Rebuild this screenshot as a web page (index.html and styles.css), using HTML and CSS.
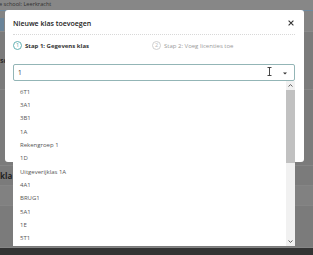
FILE: index.html
```html
<!DOCTYPE html>
<html lang="nl">
<head>
<meta charset="utf-8">
<title>Nieuwe klas toevoegen</title>
<link rel="stylesheet" href="styles.css">
</head>
<body>
<div class="page">
  <div class="topbar">e school: Leerkracht</div>
  <div class="band"><span class="band-mark"></span></div>
  <div class="row r1"><span class="bg-text">sc</span></div>
  <div class="row r2"></div>
  <div class="row r3"><span class="bg-heading">kla</span></div>
  <div class="row r4"></div>
  <div class="row r5"></div>
  <div class="footer"></div>
</div>

<div class="modal">
  <div class="modal-header">
    <h2 class="modal-title">Nieuwe klas toevoegen</h2>
    <svg class="close" width="6" height="6" viewBox="0 0 6 6"><path d="M0.6 0.6 L5.4 5.4 M5.4 0.6 L0.6 5.4" stroke="#333" stroke-width="1.1" fill="none"/></svg>
  </div>
  <div class="steps">
    <div class="step active"><span class="step-num">1</span><span class="step-label">Stap 1: Gegevens klas</span></div>
    <div class="step"><span class="step-num">2</span><span class="step-label">Stap 2: Voeg licenties toe</span></div>
  </div>
  <div class="select">
    <div class="select-box">
      <span class="select-value">1</span>
      <svg class="ibeam" width="5" height="9" viewBox="0 0 5 9"><path d="M0.5 0.5 H4.5 M2.5 0.5 V8.5 M0.5 8.5 H4.5" stroke="#333" stroke-width="0.9" fill="none"/></svg>
      <svg class="caret" width="4" height="3" viewBox="0 0 4 3"><path d="M0 0.5 H4 L2 2.6 Z" fill="#333"/></svg>
    </div>
    <div class="dropdown">
      <ul class="options">
        <li>6T1</li>
        <li>3A1</li>
        <li>3B1</li>
        <li>1A</li>
        <li>Rekengroep 1</li>
        <li>1D</li>
        <li>Uitgeverijklas 1A</li>
        <li>4A1</li>
        <li>BRUG1</li>
        <li>5A1</li>
        <li>1E</li>
        <li>5T1</li>
      </ul>
      <div class="scrollbar">
        <span class="sb-btn"><svg width="5" height="3" viewBox="0 0 5 3"><path d="M0.5 2.5 L2.5 0.6 L4.5 2.5" stroke="#505050" stroke-width="0.9" fill="none"/></svg></span>
        <span class="sb-thumb"></span>
        <span class="sb-track"></span>
        <span class="sb-btn"><svg width="5" height="3" viewBox="0 0 5 3"><path d="M0.5 0.5 L2.5 2.4 L4.5 0.5" stroke="#505050" stroke-width="0.9" fill="none"/></svg></span>
      </div>
    </div>
  </div>
</div>
</body>
</html>
```

FILE: styles.css
```css
* { box-sizing: border-box; margin: 0; padding: 0; }
html, body { width: 313px; height: 255px; overflow: hidden; }
body {
  font-family: "Open Sans", "Liberation Sans", sans-serif;
  background: #7b7b7b;
  position: relative;
}

/* dimmed page behind the modal */
.page { display: flex; flex-direction: column; height: 255px; }
.topbar {
  height: 10px;
  background: #878787;
  color: #303030;
  font-size: 5.6px;
  line-height: 9px;
  margin-left: -1px;
  white-space: nowrap;
}
.band {
  height: 22px;
  background: #848484;
  border-top: 1px solid #6f8aa0;
  border-bottom: 1px solid #8a8a8a;
  position: relative;
}
.band-mark { position: absolute; left: 0; top: 7px; width: 4px; height: 13px; background: #6a8499; }
.row { border-bottom: 1px solid #858585; position: relative; }
.r1 { height: 58px; }
.r2 { height: 76px; }
.r3 { height: 20px; }
.r4 { height: 20px; background: #818181; }
.r5 { flex: 1; }
.bg-text { position: absolute; left: 0; top: 24px; font-size: 7px; font-weight: 700; color: #2a2a2a; }
.bg-heading {
  position: absolute; left: 0; top: 4px;
  white-space: nowrap;
  font-size: 8px; font-weight: 700; color: #222;
}
.footer { height: 7px; background: #333; }

/* modal */
.modal {
  position: absolute;
  left: 5px;
  top: 10px;
  width: 299px;
  height: 152px;
  background: #fff;
  border-radius: 3px;
  padding: 0 9px 0 8px;
}
.modal-header {
  height: 25px;
  display: flex;
  align-items: center;
  justify-content: space-between;
  border-bottom: 1px dotted #d8d8d8;
}
.modal-title { font-size: 7px; font-weight: 600; color: #222; padding-top: 2px; }
.close { margin-right: 1px; margin-top: 1px; }

.steps {
  height: 20px;
  display: grid;
  grid-template-columns: 139px 1fr;
  align-items: center;
  padding-top: 1px;
}
.step { display: flex; align-items: center; gap: 3px; }
.step-num {
  width: 9px; height: 9px;
  border-radius: 50%;
  border: 1px solid #d0d0d0;
  color: #b8b8b8;
  font-size: 5.5px;
  line-height: 7px;
  text-align: center;
}
.step-label { font-size: 6px; color: #9a9a9a; }
.step.active .step-num { border-color: #62b0b2; color: #4a9ea0; }
.step.active .step-label { font-weight: 700; color: #333; font-size: 6px; }

.select { position: relative; margin-top: 9px; }
.select-box {
  height: 17px;
  border: 1px solid #93b5b6;
  border-radius: 2px;
  display: flex;
  align-items: center;
  padding: 0 7px 0 4px;
}
.select-value { flex: 1; font-size: 6.5px; color: #333; }
.ibeam { margin-right: 11px; margin-top: -3px; }
.caret { margin-top: 1px; }

.dropdown {
  position: absolute;
  left: 0;
  right: 0;
  top: 17px;
  height: 165px;
  background: #fff;
  display: flex;
}
.options { list-style: none; flex: 1; padding-top: 4.6px; }
.options li {
  height: 13.33px;
  line-height: 13.33px;
  padding-left: 7px;
  font-size: 6px;
  color: #555;
}
.scrollbar {
  width: 9px;
  background: #f1f1f1;
  display: flex;
  flex-direction: column;
}
.sb-btn { height: 9px; display: flex; align-items: center; justify-content: center; }
.sb-thumb { height: 73px; background: #c1c1c1; }
.sb-track { flex: 1; }
```
